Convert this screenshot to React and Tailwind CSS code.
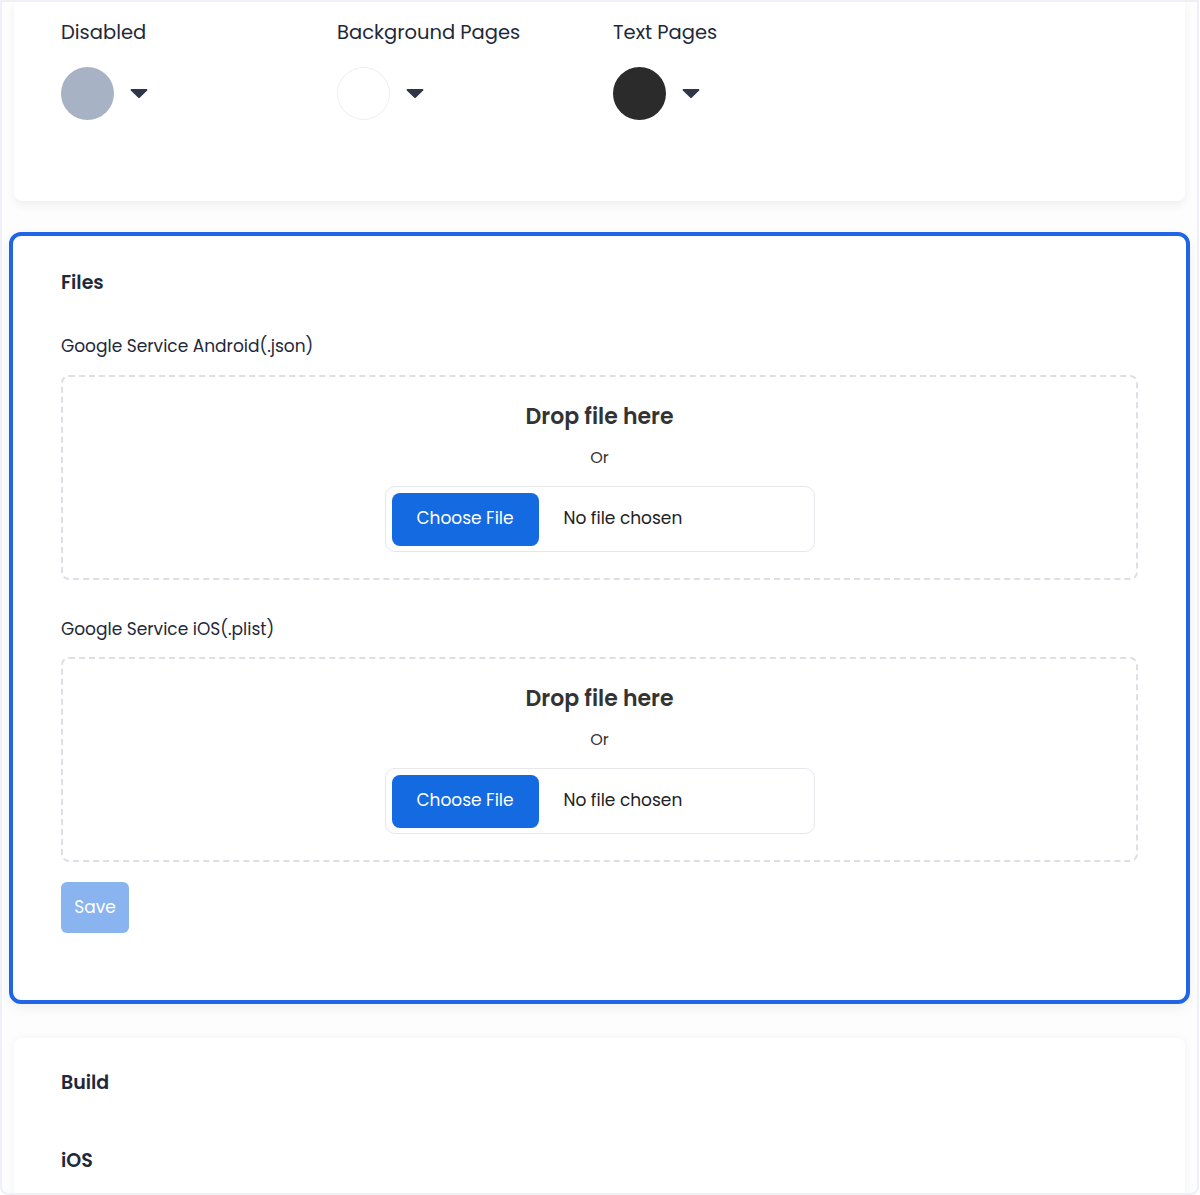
import React from 'react';

const font = { fontFamily: '"Poppins", "Open Sans", "Noto Sans", sans-serif' };

const Caret = () => (
  <svg width="18" height="11" viewBox="0 0 18 11" className="shrink-0">
    <path d="M1.5 1h15c.9 0 1.3 1 .7 1.6L9.7 9.8a1 1 0 0 1-1.4 0L.8 2.6C.2 2 .6 1 1.5 1z" fill="#2d3748" />
  </svg>
);

const ColorPick = ({ label, swatch }) => (
  <div className="w-[276px]">
    <div className="text-[19.5px] leading-[28px] text-[#1e293b]">{label}</div>
    <div className="mt-[20px] flex items-center gap-4">
      <div className={`h-[53px] w-[53px] rounded-full ${swatch}`} />
      <Caret />
    </div>
  </div>
);

const DropZone = () => (
  <div className="flex flex-col items-center rounded-lg border-2 border-dashed border-[#dcdfe4] pt-[23px] pb-[26px]">
    <div className="text-[22px] leading-[33px] font-semibold text-[#333333]">Drop file here</div>
    <div className="mt-[13px] text-[16px] leading-[24px] text-[#333333]">Or</div>
    <div className="mt-[16px] flex h-[66px] w-[430px] items-center rounded-[10px] border border-[#e5e7eb] bg-white px-[6px]">
      <button className="h-[53px] w-[147px] rounded-lg bg-[#136ae1] text-[17px] text-white">Choose File</button>
      <span className="ml-[25px] text-[17px] text-[#222222]">No file chosen</span>
    </div>
  </div>
);

export default function App() {
  return (
    <div className="bg-white" style={font}>
      <div className="h-[1195px] w-[1199px] overflow-hidden rounded-b-lg border-2 border-[#eef0f6] bg-[#fdfdfe] px-3">
        {/* colours */}
        <div className="rounded-b-lg bg-white pl-[47px] pt-[17px] pb-[81px] shadow-[0_4px_10px_rgba(0,0,0,0.06)]">
          <div className="flex">
            <ColorPick label="Disabled" swatch="bg-[#a7b2c4]" />
            <ColorPick label="Background Pages" swatch="bg-white border border-[#eeeeee]" />
            <ColorPick label="Text Pages" swatch="bg-[#2b2b2b]" />
          </div>
        </div>

        {/* files */}
        <div className="-mx-[5px] mt-[31px] rounded-xl border-4 border-[#1f65e6] bg-white px-[48px] pt-[35px] pb-[67px] shadow-[0_4px_12px_rgba(0,0,0,0.06)]">
          <div className="text-[19px] leading-[24px] font-semibold text-[#1e293b]">Files</div>
          <div className="mt-[38px] text-[17px] leading-[26px] text-[#1e293b]">Google Service Android(.json)</div>
          <div className="mt-[16px]">
            <DropZone />
          </div>
          <div className="mt-[36px] text-[17px] leading-[26px] text-[#1e293b]">Google Service iOS(.plist)</div>
          <div className="mt-[15px]">
            <DropZone />
          </div>
          <button className="mt-[20px] h-[51px] w-[68px] rounded-md bg-[#89b4ef] text-[17px] text-white">Save</button>
        </div>

        {/* build */}
        <div className="mt-[34px] rounded-lg bg-white px-[47px] pt-[33px] pb-10 shadow-[0_0_10px_rgba(0,0,0,0.05)]">
          <div className="text-[19px] leading-[24px] font-semibold text-[#1e293b]">Build</div>
          <div className="mt-[54px] text-[19px] leading-[24px] font-semibold text-[#1e293b]">iOS</div>
        </div>
      </div>
    </div>
  );
}
